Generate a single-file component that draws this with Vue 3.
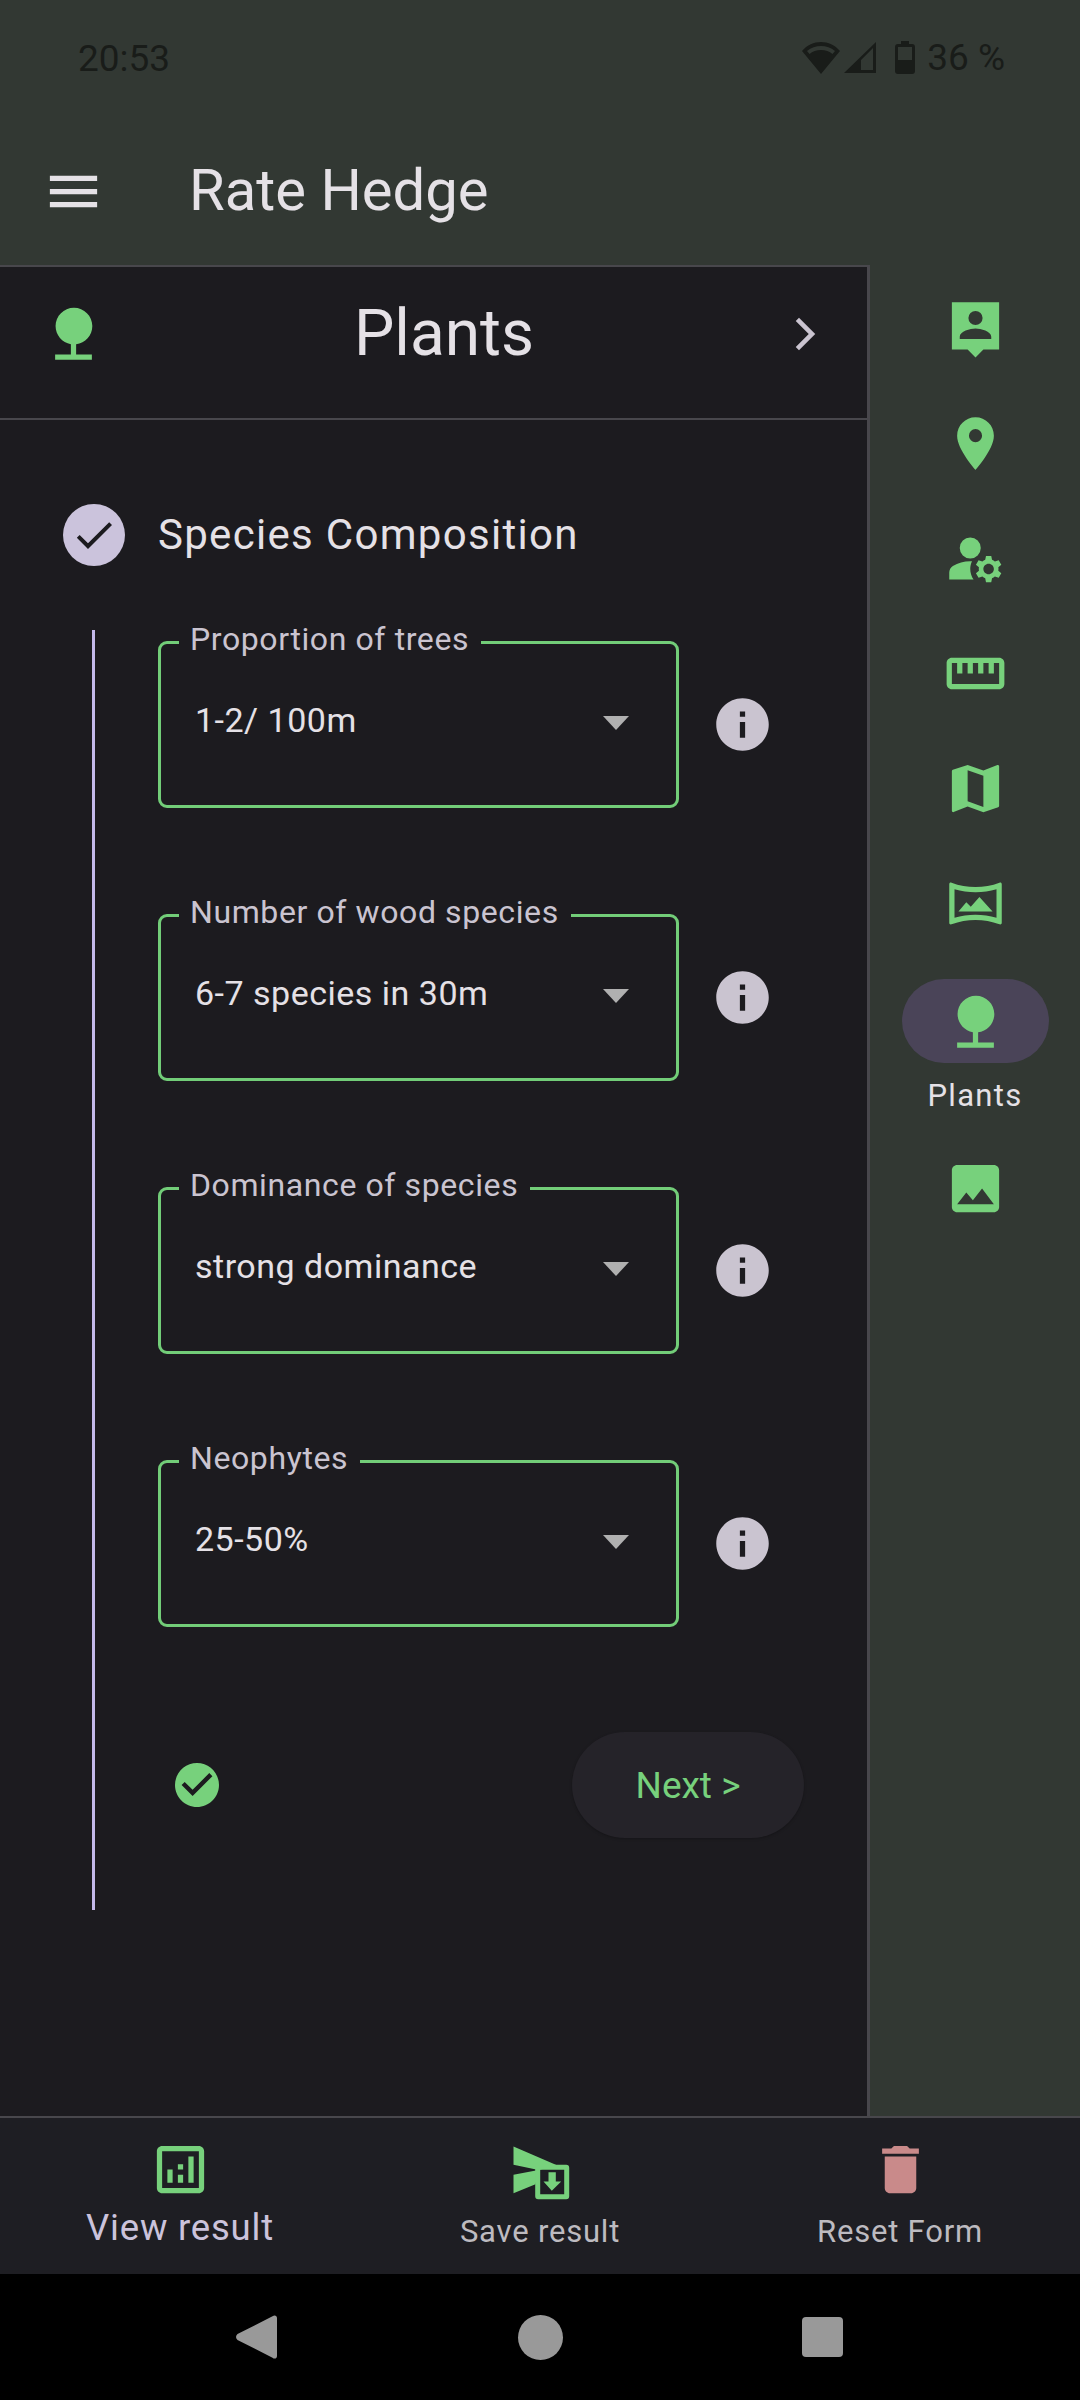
<template>
  <div class="screen">
    <!-- Status bar -->
    <div class="status">
      <span class="clock">20:53</span>
      <div class="status-right">
        <svg class="wifi" viewBox="0 0 38 32"><path fill-rule="evenodd" d="M19 32 38 9C33 3 26 0 19 0S5 3 0 9zM5 9C9 5.500 14 4 19 4s10 1.500 14 5l-2.500 3C27.500 9.500 23.500 8 19 8s-8.500 1.500-11.500 4z" /></svg>
        <svg class="signal" viewBox="0 0 32 31"><path fill-rule="evenodd" d="M32 0v31H0zM17 18v10h12V6z" /></svg>
        <svg class="battery" viewBox="0 0 20 33"><path fill-rule="evenodd" d="M6 0h8v3h3a3 3 0 0 1 3 3v24a3 3 0 0 1-3 3H3a3 3 0 0 1-3-3V6a3 3 0 0 1 3-3h3zM3 6v13h14V6z" /></svg>
        <span>36 %</span>
      </div>
    </div>

    <!-- App bar -->
    <div class="appbar">
      <svg class="menu-icon" viewBox="0 0 24 24"><path :d="icons.menu" /></svg>
      <span class="app-title">Rate Hedge</span>
    </div>

    <div class="body">
      <div class="panel">
        <div class="panel-head">
          <svg class="head-icon" viewBox="0 0 24 24"><path :d="icons.tree" /></svg>
          <span class="head-title">Plants</span>
          <svg class="head-chevron" viewBox="0 0 24 24"><path :d="icons.chevron" /></svg>
        </div>

        <div class="stepper">
          <div class="step-head">
            <div class="step-circle">
              <svg viewBox="0 0 24 24"><path :d="icons.check" /></svg>
            </div>
            <span class="step-title">Species Composition</span>
          </div>

          <div class="step-body">
            <div v-for="f in fields" :key="f.label" class="field-row">
              <div class="field">
                <span class="field-label">{{ f.label }}</span>
                <span class="field-value">{{ f.value }}</span>
                <span class="arrow"></span>
              </div>
              <svg class="info" viewBox="0 0 24 24"><path :d="icons.info" /></svg>
            </div>

            <div class="step-actions">
              <svg class="done" viewBox="0 0 20 20"><path :d="icons.checkCircle" /></svg>
              <button class="next">Next &gt;</button>
            </div>
          </div>
        </div>
      </div>

      <!-- Navigation rail -->
      <div class="rail">
        <div v-for="r in rail" :key="r.name" class="rail-item" :class="{ active: r.label }">
          <div class="rail-icon">
            <svg viewBox="0 0 24 24"><path :d="r.d" fill-rule="evenodd" /></svg>
          </div>
          <span v-if="r.label" class="rail-label">{{ r.label }}</span>
        </div>
      </div>
    </div>

    <!-- Bottom actions -->
    <div class="bottom">
      <div class="action">
        <svg viewBox="0 0 24 24"><path :d="icons.analytics" /></svg>
        <span class="first">View result</span>
      </div>
      <div class="action">
        <svg viewBox="-4.500 -8.500 63 63">
          <path d="M0 0 44 19 25 23.500 0 18.300zM0 28.300 25 23.500 22 37.700 0 46.700z" />
          <path fill-rule="evenodd" d="M24.700 18.300h28a3 3 0 0 1 3 3v28.400a3 3 0 0 1-3 3h-28a3 3 0 0 1-3-3V21.300a3 3 0 0 1 3-3zM26.700 23.300v24.400h24V23.300zM35 25.700h7.300V35h5.400l-9.400 9.300L30 35h5z" />
        </svg>
        <span>Save result</span>
      </div>
      <div class="action">
        <svg class="trash" viewBox="0 0 24 24"><path :d="icons.trash" /></svg>
        <span>Reset Form</span>
      </div>
    </div>

    <!-- System nav -->
    <div class="sysnav">
      <svg viewBox="0 0 41 44"><path d="M41 3v38c0 2.500-2.500 3.500-4.500 1.700L1.500 25c-2-1.800-2-4 0-6L36.500 1.300C38.500-.5 41 .5 41 3z" /></svg>
      <div class="home"></div>
      <div class="square"></div>
    </div>
  </div>
</template>

<script setup>
const icons = {
  menu: "M3 18h18v-2H3v2zm0-5h18v-2H3v2zm0-7v2h18V6H3z",
  tree: "M13 16.120c3.470-.41 6.170-3.360 6.170-6.950 0-3.870-3.130-7-7-7s-7 3.130-7 7c0 3.470 2.520 6.340 5.830 6.890V20H5v2h14v-2h-6v-3.880z",
  chevron: "M9.200 5.500 7.900 6.800 13.100 12l-5.200 5.200 1.300 1.300L15.700 12z",
  check: "M9 16.170 4.830 12l-1.420 1.410L9 19 21 7l-1.410-1.410z",
  info: "M12 2C6.480 2 2 6.480 2 12s4.480 10 10 10 10-4.480 10-10S17.520 2 12 2zm1 15h-2v-6h2v6zm0-8h-2V7h2v2z",
  checkCircle: "M10 0C4.480 0 0 4.480 0 10s4.480 10 10 10 10-4.480 10-10S15.520 0 10 0zM8 15l-5-5 1.410-1.410L8 12.170l7.590-7.590L17 6l-9 9z",
  analytics: "M19 3H5c-1.100 0-2 .9-2 2v14c0 1.100.9 2 2 2h14c1.100 0 2-.9 2-2V5c0-1.100-.9-2-2-2zm0 16H5V5h14v14zM7 12h2v5H7zm8-5h2v10h-2zm-4 7h2v3h-2zm0-4h2v2h-2z",
  trash: "M6 19c0 1.100.9 2 2 2h8c1.100 0 2-.9 2-2V7H6v12zM19 4h-3.500l-1-1h-5l-1 1H5v2h14V4z",
}

const fields = [
  { label: "Proportion of trees", value: "1-2/ 100m" },
  { label: "Number of wood species", value: "6-7 species in 30m" },
  { label: "Dominance of species", value: "strong dominance" },
  { label: "Neophytes", value: "25-50%" },
]

const rail = [
  { name: "contact", d: "M3 2h18v18h-6l-3 3-3-3H3zM12 5.300a2.700 2.700 0 1 0 0 5.400 2.700 2.700 0 0 0 0-5.400zM18 16v-.9c0-2-4-3.100-6-3.100s-6 1.100-6 3.100v.9z" },
  { name: "place", d: "M12 2C8.130 2 5 5.130 5 9c0 5.250 7 13 7 13s7-7.750 7-13c0-3.870-3.130-7-7-7zm0 9.500a2.500 2.500 0 1 1 0-5 2.500 2.500 0 0 1 0 5z" },
  { name: "manage", d: "M6 8a4 4 0 1 0 8 0 4 4 0 0 0-8 0zM10.670 13.020C10.450 13.010 10.230 13 10 13c-2.420 0-4.680.67-6.610 1.820-.88.52-1.390 1.500-1.390 2.530V20h9.260c-.79-1.130-1.260-2.510-1.260-4 0-1.070.25-2.070.67-2.980zM20.750 16c0-.22-.03-.42-.06-.63l1.140-1.010-1-1.730-1.450.49c-.32-.27-.68-.48-1.080-.63L18 11h-2l-.3 1.490c-.4.15-.76.36-1.080.63l-1.450-.49-1 1.730 1.140 1.010c-.03.21-.06.41-.06.63s.03.42.06.63l-1.140 1.010 1 1.730 1.450-.49c.32.27.68.48 1.080.63L16 21h2l.3-1.490c.4-.15.76-.36 1.080-.63l1.450.49 1-1.730-1.140-1.010c.03-.21.06-.41.06-.63zM17 18c-1.100 0-2-.9-2-2s.9-2 2-2 2 .9 2 2-.9 2-2 2z" },
  { name: "ruler", d: "M21 6H3c-1.100 0-2 .9-2 2v8c0 1.100.9 2 2 2h18c1.100 0 2-.9 2-2V8c0-1.100-.9-2-2-2zm0 10H3V8h2v4h2V8h2v4h2V8h2v4h2V8h2v4h2V8h2v8z" },
  { name: "map", d: "M20.500 3l-.16.03L15 5.100 9 3 3.360 4.900c-.21.07-.36.25-.36.48V20.500c0 .28.22.5.5.5l.16-.03L9 18.900l6 2.100 5.640-1.900c.21-.07.36-.25.36-.48V3.500c0-.28-.22-.5-.5-.5zM15 19l-6-2.110V5l6 2.110V19z" },
  { name: "panorama", d: "M20 6.540v10.910c-2.600-.77-5.280-1.160-8-1.160-2.720 0-5.400.39-8 1.160V6.540c2.600.77 5.280 1.160 8 1.160 2.720.01 5.400-.38 8-1.160M21.430 4c-.1 0-.2.02-.31.06C18.180 5.160 15.090 5.700 12 5.700c-3.090 0-6.180-.55-9.120-1.640-.11-.04-.22-.06-.31-.06-.34 0-.57.23-.57.63v14.750c0 .39.23.62.57.62.1 0 .2-.02.31-.06 2.940-1.100 6.030-1.640 9.120-1.640 3.090 0 6.180.55 9.120 1.640.11.04.21.06.31.06.33 0 .57-.23.57-.63V4.630c0-.4-.24-.63-.57-.63zM5.500 15 8.500 11.500 10.200 13.200 13.500 9.500 18.500 15z" },
  { name: "plants", label: "Plants", d: icons.tree },
  { name: "image", d: "M21 19V5c0-1.100-.9-2-2-2H5c-1.100 0-2 .9-2 2v14c0 1.100.9 2 2 2h14c1.100 0 2-.9 2-2zM8.500 13.500l2.500 3.010L14.500 12l4.500 6H5l3.500-4.500z" },
]
</script>

<style scoped>
.screen {
  width: 1080px;
  height: 2400px;
  display: flex;
  flex-direction: column;
  background: #323833;
  font-family: Roboto, "Noto Sans", sans-serif;
  color: #e5e1e6;
  overflow: hidden;
}
.status {
  height: 115px;
  flex: none;
  display: flex;
  align-items: center;
  justify-content: space-between;
  padding: 0 75px 0 78px;
  font-size: 37px;
  color: #191c19;
}
.clock {
  margin-top: 2px;
}
.status-right {
  display: flex;
  align-items: center;
}
.status-right svg {
  fill: #191c19;
}
.wifi {
  width: 38px;
  height: 32px;
}
.signal {
  width: 32px;
  height: 31px;
  margin-left: 4px;
}
.battery {
  width: 20px;
  height: 33px;
  margin-left: 19px;
  margin-right: 12px;
}
.appbar {
  height: 150px;
  flex: none;
  display: flex;
  align-items: center;
  padding-left: 42px;
}
.menu-icon {
  width: 63px;
  height: 63px;
  margin-top: 2px;
  fill: #e5e1e6;
  flex: none;
}
.app-title {
  margin-left: 84px;
  font-size: 58px;
}
.body {
  flex: 1;
  display: flex;
  min-height: 0;
}
.panel {
  width: 870px;
  flex: none;
  background: #1c1b1f;
  border-top: 2px solid #48474c;
  border-right: 3px solid #48474c;
  box-sizing: border-box;
}
.panel-head {
  height: 133px;
  padding-bottom: 18px;
  display: flex;
  align-items: center;
  border-bottom: 2px solid #48474c;
}
.head-icon {
  width: 63px;
  height: 63px;
  margin-left: 42px;
  fill: #77d17c;
  flex: none;
}
.head-title {
  flex: 1;
  text-align: center;
  font-size: 64px;
  margin-left: 7px;
}
.head-chevron {
  width: 60px;
  height: 60px;
  fill: #cac4d0;
  margin-right: 31px;
  flex: none;
}
.stepper {
  padding-top: 84px;
}
.step-head {
  display: flex;
  align-items: center;
  padding-left: 63px;
}
.step-circle {
  width: 62px;
  height: 62px;
  border-radius: 50%;
  background: #cbc3dc;
  display: flex;
  align-items: center;
  justify-content: center;
}
.step-circle svg {
  width: 48px;
  height: 48px;
  fill: #1c1b1f;
}
.step-title {
  margin-left: 33px;
  margin-top: -2px;
  font-size: 42px;
  letter-spacing: 1.3px;
}
.step-body {
  margin: 64px 0 0 92px;
  border-left: 3px solid #c4b9ea;
  padding: 11px 0 0 63px;
  height: 1280px;
  box-sizing: border-box;
}
.field-row {
  display: flex;
  align-items: center;
  margin-bottom: 106px;
}
.field {
  position: relative;
  width: 521px;
  height: 167px;
  box-sizing: border-box;
  border: 3px solid #72cd78;
  border-radius: 9px;
  padding: 56px 0 0 34px;
}
.field-label {
  position: absolute;
  top: -20px;
  left: 18px;
  padding: 0 12px 0 11px;
  background: #1c1b1f;
  font-size: 32px;
  line-height: 30px;
  color: #cac4d0;
  letter-spacing: 0.6px;
  white-space: nowrap;
}
.field-value {
  font-size: 34px;
  line-height: 40px;
  letter-spacing: 0.5px;
}
.arrow {
  position: absolute;
  top: 72px;
  right: 47px;
  border-left: 13.5px solid transparent;
  border-right: 13.5px solid transparent;
  border-top: 14px solid #b0b0b0;
}
.info {
  width: 63px;
  height: 63px;
  fill: #cac4d0;
  margin-left: 32px;
  flex: none;
}
.step-actions {
  display: flex;
  align-items: center;
  justify-content: space-between;
  width: 646px;
  margin-top: -1px;
}
.done {
  width: 44px;
  height: 44px;
  fill: #77d17c;
  margin-left: 17px;
}
.next {
  width: 232px;
  height: 106px;
  border: none;
  border-radius: 53px;
  background: #252329;
  color: #77d17c;
  font-family: inherit;
  font-size: 37px;
  box-shadow: 0 1px 3px rgba(0, 0, 0, 0.25);
}
.rail {
  flex: 1;
  display: flex;
  flex-direction: column;
  align-items: center;
  padding: 32px 0 0 0;
  gap: 52px;
}
.rail-item {
  display: flex;
  flex-direction: column;
  align-items: center;
  width: 147px;
}
.rail-icon {
  width: 147px;
  height: 63px;
  display: flex;
  align-items: center;
  justify-content: center;
  border-radius: 42px;
}
.rail-icon svg {
  width: 63px;
  height: 63px;
  fill: #77d17c;
}
.rail-item.active {
  margin-bottom: -3px;
}
.active .rail-icon {
  height: 84px;
  margin-top: -8px;
  background: #4a4458;
}
.rail-label {
  font-size: 31px;
  margin-top: 21px;
  line-height: 24px;
  letter-spacing: 1.3px;
}
.bottom {
  height: 158px;
  flex: none;
  background: #1e1e23;
  border-top: 2px solid #48474c;
  box-sizing: border-box;
  display: flex;
  justify-content: center;
}
.action {
  width: 360px;
  display: flex;
  flex-direction: column;
  align-items: center;
  padding-top: 20px;
  color: #bdbbc0;
  font-size: 31px;
  line-height: 36px;
  letter-spacing: 0.8px;
}
.action svg {
  width: 63px;
  height: 63px;
  fill: #77d17c;
}
.action span {
  margin-top: 13px;
}
.action .first {
  font-size: 36.500px;
  color: #cbc3dc;
  margin-top: 9px;
}
.action .trash {
  fill: #c98a8a;
}
.sysnav {
  height: 126px;
  flex: none;
  background: #000;
  display: flex;
  align-items: center;
}
.sysnav svg {
  width: 41px;
  height: 44px;
  fill: #999;
  margin-left: 236px;
}
.home {
  width: 45px;
  height: 45px;
  border-radius: 50%;
  background: #999;
  margin-left: 241px;
}
.square {
  width: 41px;
  height: 40px;
  border-radius: 4px;
  background: #999;
  margin-left: 239px;
}
</style>
<style>
html, body { margin: 0; background: #000; }
</style>
